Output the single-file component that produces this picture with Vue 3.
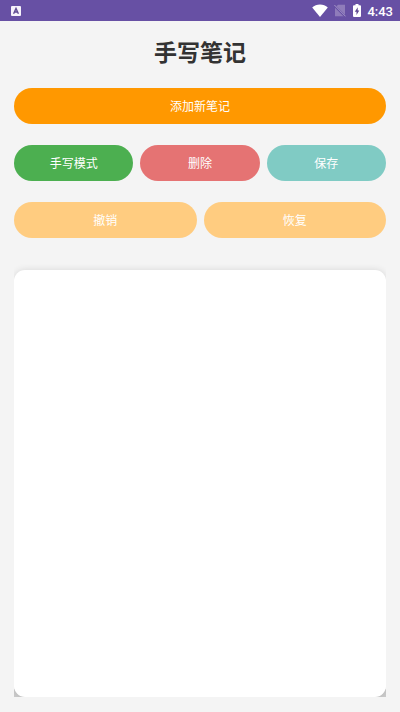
<script setup>
import { ref } from 'vue'

const modeRow = ref([
  { label: '手写模式', tone: 'green' },
  { label: '删除', tone: 'red' },
  { label: '保存', tone: 'teal' },
])
const historyRow = ref([
  { label: '撤销', tone: 'amber' },
  { label: '恢复', tone: 'amber' },
])
</script>

<template>
  <div class="screen">
    <header class="status">
      <svg class="app-icon" width="10" height="10" viewBox="0 0 10 10" aria-hidden="true">
        <rect width="10" height="10" rx="1" fill="#f6f2fb" />
        <path d="M2.600 7.800 5 2.400 7.400 7.800M3.500 6h3" fill="none" stroke="#5f4a92" stroke-width="1.400" />
      </svg>
      <div class="indicators">
        <svg width="16" height="13" viewBox="0 0 16 13" aria-hidden="true">
          <path d="M8 13 .2 3.400C2.200 1.500 5 .5 8 .5s5.800 1 7.800 2.900z" fill="#fff" />
        </svg>
        <svg class="sim" width="12" height="13" viewBox="0 0 12 13" aria-hidden="true">
          <path d="M4 .8h7v11.400H1V3.800z" fill="#8f7cba" />
          <path d="M0 1.200 11.500 12.700" stroke="#6750a4" stroke-width="2.200" />
          <path d="M.4 1 11.600 12.400" stroke="#a597c9" stroke-width="1" />
        </svg>
        <svg class="battery" width="8" height="13" viewBox="0 0 8 13" aria-hidden="true">
          <path d="M2.500 0h3v1.200H7a1 1 0 0 1 1 1V12a1 1 0 0 1-1 1H1a1 1 0 0 1-1-1V2.200a1 1 0 0 1 1-1h1.500z" fill="#fff" />
          <path d="M4.700 3.300 1.800 7.700h1.700v3.200l2.800-4.400H4.700z" fill="#5c468f" />
        </svg>
        <time class="clock">4:43</time>
      </div>
    </header>
    <main class="content">
      <h1>手写笔记</h1>
      <div class="row"><button type="button" class="orange">添加新笔记</button></div>
      <div class="row">
        <button v-for="b in modeRow" :key="b.label" type="button" :class="b.tone">{{ b.label }}</button>
      </div>
      <div class="row">
        <button v-for="b in historyRow" :key="b.label" type="button" :class="b.tone">{{ b.label }}</button>
      </div>
      <div class="board"><canvas class="paper"></canvas></div>
    </main>
  </div>
</template>

<style>
body {
  margin: 0;
  background: #f4f4f4;
}
</style>

<style scoped>
.screen {
  box-sizing: border-box;
  min-height: 100vh;
  display: flex;
  flex-direction: column;
  background: #f4f4f4;
  font-family: Roboto, "Noto Sans CJK SC", sans-serif;
}
.status {
  height: 21px;
  padding: 0 7px 0 11px;
  display: flex;
  align-items: center;
  justify-content: space-between;
  background: #6750a4;
}
.indicators {
  display: flex;
  align-items: center;
}
.sim {
  margin-left: 6px;
}
.battery {
  margin-left: 7px;
}
.clock {
  margin-left: 6px;
  padding-top: 2px;
  color: #fff;
  font-size: 13px;
  font-weight: 500;
  line-height: 19px;
}
.content {
  flex: 1;
  display: flex;
  flex-direction: column;
  padding: 14px 14px 15px;
}
h1 {
  margin: 0 0 21px;
  color: #333;
  font-family: "Noto Sans CJK SC", sans-serif;
  font-size: 23px;
  font-weight: 700;
  line-height: 32px;
  text-align: center;
}
.row {
  display: flex;
  gap: 7px;
  margin-bottom: 21px;
}
button {
  flex: 1 1 0;
  min-height: 36px;
  padding: 2px 0 0;
  border: 0;
  border-radius: 18px;
  color: #fff;
  font-family: inherit;
  font-size: 12px;
  line-height: 18px;
}
.orange {
  background: #ff9800;
}
.green {
  background: #4caf50;
}
.red {
  background: #e57373;
}
.teal {
  background: #80cbc4;
}
.amber {
  background: #ffcc80;
}
.board {
  flex: 1;
  display: flex;
  min-height: 200px;
  padding-top: 11px;
  overflow: hidden;
  background: linear-gradient(#ccc, #ccc) bottom / 100% 8px no-repeat;
}
.paper {
  flex: 1;
  width: 100%;
  min-width: 0;
  border-radius: 11px;
  background: #fff;
  box-shadow: 0 0 7px rgba(0, 0, 0, 0.12);
}
</style>
